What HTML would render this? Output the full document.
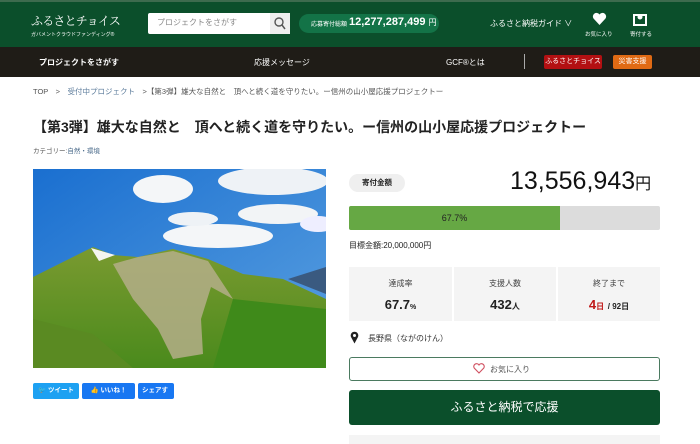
<!DOCTYPE html>
<html><head><meta charset="utf-8"><style>
*{margin:0;padding:0;box-sizing:border-box}
body{width:700px;height:444px;overflow:hidden;background:#fff;font-family:"Liberation Sans","Noto Sans CJK JP",sans-serif;color:#222;position:relative}
.a{position:absolute}
</style></head><body>
<div class="a" style="left:0;top:0;width:700px;height:47px;background:#0b4f2b;border-top:2px solid #3d6b4e"></div>
<div class="a" style="left:31px;top:12px;color:#fff;font-size:12px;font-family:'Noto Serif CJK SC',serif;letter-spacing:-0.8px">ふるさとチョイス</div>
<div class="a" style="left:31px;top:31px;color:#fff;font-size:5px">ガバメントクラウドファンディング®</div>
<div class="a" style="left:148px;top:13px;width:142px;height:21px;background:#fff;border-radius:2px"></div>
<div class="a" style="left:157px;top:17px;font-size:8px;color:#888">プロジェクトをさがす</div>
<div class="a" style="left:270px;top:13px;width:20px;height:21px;background:#eee"></div>
<svg class="a" style="left:274px;top:17px" width="12" height="13"><circle cx="5" cy="5" r="4" stroke="#555" stroke-width="1.4" fill="none"/><line x1="8" y1="8" x2="11" y2="12" stroke="#555" stroke-width="1.5"/></svg>
<div class="a" style="left:299px;top:14px;width:140px;height:19px;background:#137347;border-radius:10px"></div>
<div class="a" style="left:311px;top:19px;font-size:6px;color:#fff">応募寄付総額</div>
<div class="a" style="left:349px;top:16px;font-size:11px;color:#fff;font-weight:bold">12,277,287,499 <span style="font-size:8px;font-weight:normal">円</span></div>
<div class="a" style="left:490px;top:18px;font-size:8px;color:#fff">ふるさと納税ガイド ∨</div>
<svg class="a" style="left:592px;top:12px" width="15" height="14"><path d="M7.5 13 L1.5 6.5 A3.3 3.3 0 0 1 7.5 2.5 A3.3 3.3 0 0 1 13.5 6.5 Z" fill="#fff"/></svg>
<div class="a" style="left:585px;top:30px;font-size:5.5px;color:#fff">お気に入り</div>
<svg class="a" style="left:633px;top:12px" width="14" height="14"><rect x="1" y="3" width="12" height="10" fill="none" stroke="#fff" stroke-width="2"/><circle cx="7" cy="5" r="2.5" fill="#fff"/></svg>
<div class="a" style="left:630px;top:30px;font-size:5.5px;color:#fff">寄付する</div>
<div class="a" style="left:0;top:47px;width:700px;height:30px;background:#1f1c17"></div>
<div class="a" style="left:39px;top:57px;font-size:8px;color:#fff;font-weight:bold">プロジェクトをさがす</div>
<div class="a" style="left:254px;top:57px;font-size:8px;color:#fff">応援メッセージ</div>
<div class="a" style="left:446px;top:57px;font-size:8px;color:#fff">GCF®とは</div>
<div class="a" style="left:524px;top:54px;width:1px;height:15px;background:#aaa"></div>
<div class="a" style="left:544px;top:55px;width:58px;height:14px;background:#b31012;border-radius:2px;color:#fff;font-size:7px;text-align:center;line-height:14px">ふるさとチョイス</div>
<div class="a" style="left:613px;top:55px;width:39px;height:14px;background:#e06a14;border-radius:2px;color:#fff;font-size:7px;text-align:center;line-height:14px">災害支援</div>
<div class="a" style="left:33px;top:86px;font-size:7.5px;color:#555;white-space:nowrap">TOP　&gt;　<span style="color:#5a7a9a">受付中プロジェクト</span>　&gt;【第3弾】雄大な自然と　頂へと続く道を守りたい。ー信州の山小屋応援プロジェクトー</div>
<div class="a" style="left:33px;top:117px;font-size:14px;font-weight:bold;white-space:nowrap">【第3弾】雄大な自然と　頂へと続く道を守りたい。ー信州の山小屋応援プロジェクトー</div>
<div class="a" style="left:33px;top:145px;font-size:6.5px;color:#555">カテゴリー:<span style="color:#4a6a8a">自然・環境</span></div>
<svg class="a" style="left:33px;top:169px" width="293" height="199" viewBox="0 0 293 199">
<defs><linearGradient id="s" x1="0" y1="0" x2="1" y2="1"><stop offset="0" stop-color="#1a6fd0"/><stop offset="1" stop-color="#5aa0e0"/></linearGradient>
<linearGradient id="g" x1="0" y1="0" x2="0" y2="1"><stop offset="0" stop-color="#7a9a30"/><stop offset="1" stop-color="#4a8a1c"/></linearGradient></defs>
<rect width="293" height="199" fill="url(#s)"/>
<ellipse cx="130" cy="20" rx="30" ry="14" fill="#f4f6f8"/><ellipse cx="240" cy="12" rx="55" ry="14" fill="#eef2f6"/>
<ellipse cx="245" cy="45" rx="40" ry="10" fill="#f2f4f6"/><ellipse cx="185" cy="67" rx="55" ry="12" fill="#f4f6f8"/>
<ellipse cx="160" cy="50" rx="25" ry="7" fill="#eef2f6"/><ellipse cx="285" cy="55" rx="18" ry="8" fill="#eef"/>
<path d="M255 110 L293 98 L293 125 Z" fill="#3a5a80"/>
<path d="M0 108 L60 78 L80 86 L105 88 L140 80 L175 90 L210 105 L250 110 L293 130 L293 199 L0 199 Z" fill="url(#g)"/>
<path d="M58 79 L82 86 L66 92 Z" fill="#f4f4f0"/>
<path d="M80 95 L105 88 L140 82 L175 92 L200 130 L178 118 L168 150 L170 185 L140 190 L125 160 L100 130 Z" fill="#b4ae88" opacity="0.85"/>
<path d="M0 150 L60 165 L100 199 L0 199Z" fill="#5a8a22"/>
<path d="M200 130 L293 140 L293 199 L180 199Z" fill="#3f8a1a"/>
</svg>
<div class="a" style="left:33px;top:383px;width:46px;height:16px;background:#1da1f2;color:#fff;font-size:6.5px;font-weight:bold;line-height:16px;text-align:center;border-radius:2px">🐦 ツイート</div>
<div class="a" style="left:82px;top:383px;width:53px;height:16px;background:#1877f2;color:#fff;font-size:6.5px;font-weight:bold;line-height:16px;text-align:center;border-radius:2px">👍 いいね！</div>
<div class="a" style="left:138px;top:383px;width:36px;height:16px;background:#1877f2;color:#fff;font-size:6.5px;font-weight:bold;line-height:16px;padding-left:4px;border-radius:2px;overflow:hidden;white-space:nowrap">シェアす</div>
<div class="a" style="left:349px;top:174px;width:56px;height:18px;background:#efefef;border-radius:9px;font-size:7.5px;font-weight:bold;text-align:center;line-height:18px">寄付金額</div>
<div class="a" style="left:510px;top:167px;font-size:25px;color:#111;white-space:nowrap">13,556,943<span style="font-size:16px">円</span></div>
<div class="a" style="left:349px;top:206px;width:311px;height:24px;background:#dcdcdc;border-radius:2px"></div>
<div class="a" style="left:349px;top:206px;width:211px;height:24px;background:#66a844;border-radius:2px 0 0 2px;font-size:9px;text-align:center;line-height:24px;color:#222">67.7%</div>
<div class="a" style="left:349px;top:240px;font-size:8px">目標金額:20,000,000円</div>
<div class="a" style="left:349px;top:267px;width:311px;height:54px;background:#f4f4f4"></div>
<div class="a" style="left:452px;top:267px;width:2px;height:54px;background:#fff"></div>
<div class="a" style="left:556px;top:267px;width:2px;height:54px;background:#fff"></div>
<div class="a" style="left:349px;top:278px;width:103px;text-align:center;font-size:8px;color:#444">達成率</div>
<div class="a" style="left:349px;top:297px;width:103px;text-align:center;font-size:13px;font-weight:bold">67.7<span style="font-size:7px">%</span></div>
<div class="a" style="left:454px;top:278px;width:102px;text-align:center;font-size:8px;color:#444">支援人数</div>
<div class="a" style="left:454px;top:297px;width:102px;text-align:center;font-size:13px;font-weight:bold">432<span style="font-size:8px">人</span></div>
<div class="a" style="left:558px;top:278px;width:102px;text-align:center;font-size:8px;color:#444">終了まで</div>
<div class="a" style="left:558px;top:297px;width:102px;text-align:center;font-size:13px;font-weight:bold"><span style="color:#c01818">4<span style="font-size:8px">日</span></span> <span style="font-size:8px">/ 92日</span></div>
<svg class="a" style="left:350px;top:331px" width="9" height="13"><path d="M4.5 12.5 L1 6 A3.8 3.8 0 1 1 8 6 Z" fill="#222"/><circle cx="4.5" cy="4.5" r="1.5" fill="#fff"/></svg>
<div class="a" style="left:368px;top:333px;font-size:8px;color:#333">長野県（ながのけん）</div>
<div class="a" style="left:349px;top:357px;width:311px;height:24px;border:1px solid #4b7a60;border-radius:3px"></div>
<svg class="a" style="left:473px;top:363px" width="12" height="11"><path d="M6 10 L1.2 5 A2.6 2.6 0 0 1 6 2 A2.6 2.6 0 0 1 10.8 5 Z" fill="none" stroke="#d05060" stroke-width="1.1"/></svg>
<div class="a" style="left:490px;top:364px;font-size:8px;color:#555">お気に入り</div>
<div class="a" style="left:349px;top:390px;width:311px;height:35px;background:#0b4f2b;border-radius:3px;color:#fff;font-size:12px;text-align:center;line-height:35px">ふるさと納税で応援</div>
<div class="a" style="left:349px;top:435px;width:311px;height:9px;background:#f4f4f4"></div>
</body></html>
